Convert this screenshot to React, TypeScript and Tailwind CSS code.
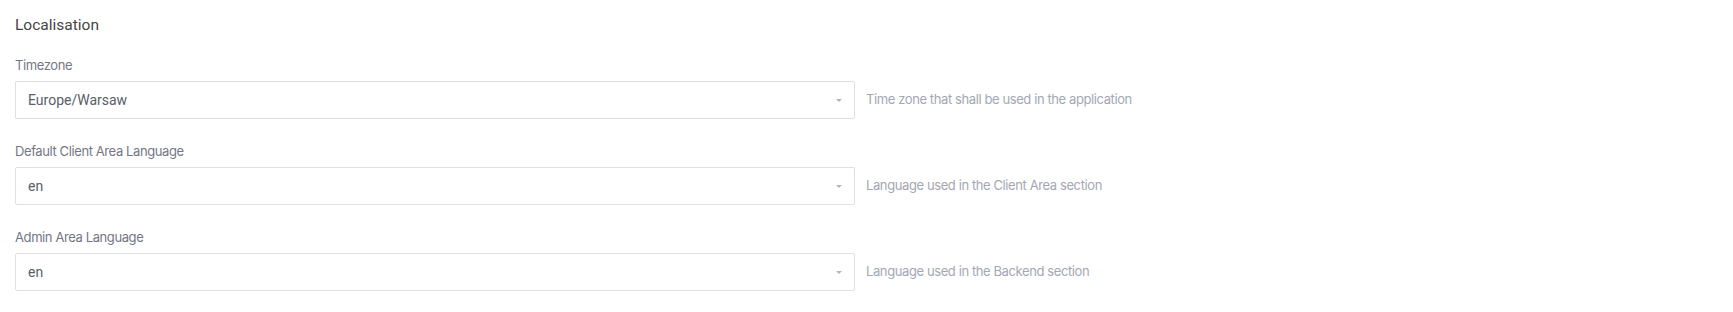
const fields = [
  { label: 'Timezone', value: 'Europe/Warsaw', hint: 'Time zone that shall be used in the application' },
  { label: 'Default Client Area Language', value: 'en', hint: 'Language used in the Client Area section' },
  { label: 'Admin Area Language', value: 'en', hint: 'Language used in the Backend section' },
];

function Caret() {
  return (
    <svg width="6" height="3" viewBox="0 0 6 3" className="shrink-0">
      <path d="M0 0 L6 0 L3 3 Z" fill="#b5b5b5" />
    </svg>
  );
}

export default function App() {
  return (
    <div className="bg-white min-h-[312px] px-[15px] pt-[14px] font-['Roboto',sans-serif]">
      <h3 className="text-[15.5px] leading-[22px] text-[#444]">Localisation</h3>

      <div className="mt-[20px] flex flex-col gap-[23px]">
        {fields.map((f) => (
          <div key={f.label}>
            <label className="block text-[13px] leading-[18px] tracking-[-0.4px] text-[#737785] font-['Inter',sans-serif] mb-[7px]">
              {f.label}
            </label>
            <div className="flex items-center">
              <div className="w-[840px] h-[38px] border border-[#dcdfe6] rounded-[2px] flex items-center justify-between pl-[12px] pr-[12px] bg-white">
                <span className="text-[14px] text-[#5a5e68]">{f.value}</span>
                <Caret />
              </div>
              <span className="ml-[11px] text-[13px] tracking-[-0.4px] text-[#a3a7b3] font-['Inter',sans-serif]">
                {f.hint}
              </span>
            </div>
          </div>
        ))}
      </div>
    </div>
  );
}
